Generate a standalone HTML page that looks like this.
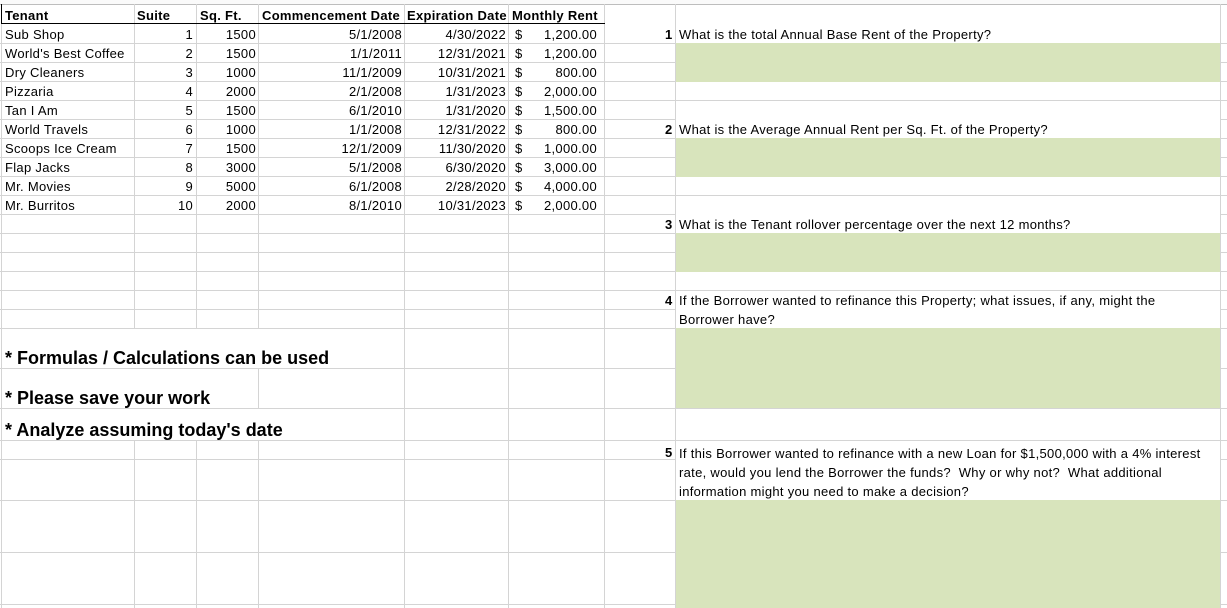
<!DOCTYPE html>
<html><head><meta charset="utf-8"><style>
*{margin:0;padding:0;box-sizing:border-box}
body{width:1227px;height:608px;overflow:hidden;background:#fff;position:relative;font-family:"Liberation Sans",Arial,sans-serif;font-size:13px;letter-spacing:0.3px;color:#000}
.h{position:absolute;height:1px;background:#d4d4d4}
.v{position:absolute;width:1px;background:#d4d4d4}
.b{position:absolute}
.t{position:absolute;white-space:nowrap;line-height:19px;height:19px}
.r{text-align:right}
.g{position:absolute;background:#d8e4bc}
.w{position:absolute;background:#fff}
.big{position:absolute;white-space:nowrap;font-weight:bold;font-size:18px;letter-spacing:0;line-height:20px}
.n{font-weight:bold;letter-spacing:0}
</style></head><body>
<div style="position:absolute;left:0;top:0;width:1227px;height:4px;background:#fafafa"></div>
<div class="h" style="left:0;top:4px;width:1227px;background:#bdbdbd"></div>
<div class="h" style="left:0;top:43px;width:1227px"></div>
<div class="h" style="left:0;top:62px;width:1227px"></div>
<div class="h" style="left:0;top:81px;width:1227px"></div>
<div class="h" style="left:0;top:100px;width:1227px"></div>
<div class="h" style="left:0;top:119px;width:1227px"></div>
<div class="h" style="left:0;top:138px;width:1227px"></div>
<div class="h" style="left:0;top:157px;width:1227px"></div>
<div class="h" style="left:0;top:176px;width:1227px"></div>
<div class="h" style="left:0;top:195px;width:1227px"></div>
<div class="h" style="left:0;top:214px;width:1227px"></div>
<div class="h" style="left:0;top:233px;width:1227px"></div>
<div class="h" style="left:0;top:252px;width:1227px"></div>
<div class="h" style="left:0;top:271px;width:1227px"></div>
<div class="h" style="left:0;top:290px;width:1227px"></div>
<div class="h" style="left:0;top:309px;width:1227px"></div>
<div class="h" style="left:0;top:328px;width:1227px"></div>
<div class="h" style="left:0;top:368px;width:1227px"></div>
<div class="h" style="left:0;top:408px;width:1227px"></div>
<div class="h" style="left:0;top:440px;width:1227px"></div>
<div class="h" style="left:0;top:459px;width:1227px"></div>
<div class="h" style="left:0;top:500px;width:1227px"></div>
<div class="h" style="left:0;top:552px;width:1227px"></div>
<div class="h" style="left:0;top:604px;width:1227px"></div>
<div class="v" style="left:1px;top:4px;height:604px"></div>
<div class="v" style="left:134px;top:4px;height:604px"></div>
<div class="v" style="left:196px;top:4px;height:604px"></div>
<div class="v" style="left:258px;top:4px;height:604px"></div>
<div class="v" style="left:404px;top:4px;height:604px"></div>
<div class="v" style="left:508px;top:4px;height:604px"></div>
<div class="v" style="left:604px;top:4px;height:604px"></div>
<div class="v" style="left:675px;top:4px;height:604px"></div>
<div class="v" style="left:1220px;top:4px;height:604px"></div>
<div class="w" style="left:2px;top:329px;width:402px;height:39px"></div>
<div class="w" style="left:2px;top:369px;width:256px;height:39px"></div>
<div class="w" style="left:259px;top:369px;width:145px;height:39px"></div>
<div class="w" style="left:2px;top:409px;width:402px;height:31px"></div>
<div class="w" style="left:676px;top:5px;width:544px;height:38px"></div>
<div class="w" style="left:676px;top:101px;width:544px;height:37px"></div>
<div class="w" style="left:676px;top:196px;width:544px;height:37px"></div>
<div class="w" style="left:676px;top:291px;width:544px;height:37px"></div>
<div class="w" style="left:676px;top:441px;width:544px;height:59px"></div>
<div class="g" style="left:676px;top:43px;width:544px;height:39px"></div>
<div class="g" style="left:676px;top:138px;width:544px;height:39px"></div>
<div class="g" style="left:676px;top:233px;width:544px;height:39px"></div>
<div class="g" style="left:676px;top:328px;width:544px;height:80px"></div>
<div class="g" style="left:676px;top:500px;width:544px;height:108px"></div>
<div class="b" style="left:1px;top:23px;width:604px;height:1px;background:#000"></div>
<div class="b" style="left:1px;top:4px;width:1px;height:20px;background:#000"></div>
<div class="t n" style="left:5px;top:6px;letter-spacing:0.3px">Tenant</div>
<div class="t n" style="left:137px;top:6px;letter-spacing:0.3px">Suite</div>
<div class="t n" style="left:200px;top:6px;letter-spacing:0.3px">Sq. Ft.</div>
<div class="t n" style="left:262px;top:6px;letter-spacing:0.3px">Commencement Date</div>
<div class="t n" style="left:407px;top:6px;letter-spacing:0.3px">Expiration Date</div>
<div class="t n" style="left:512px;top:6px;letter-spacing:0.3px">Monthly Rent</div>
<div class="t" style="left:5px;top:25px">Sub Shop</div><div class="t r" style="right:1034px;top:25px">1</div><div class="t r" style="right:971px;top:25px">1500</div><div class="t r" style="right:825px;top:25px">5/1/2008</div><div class="t r" style="right:721px;top:25px">4/30/2022</div><div class="t" style="left:515px;top:25px">$</div><div class="t r" style="right:630px;top:25px">1,200.00</div>
<div class="t" style="left:5px;top:44px">World's Best Coffee</div><div class="t r" style="right:1034px;top:44px">2</div><div class="t r" style="right:971px;top:44px">1500</div><div class="t r" style="right:825px;top:44px">1/1/2011</div><div class="t r" style="right:721px;top:44px">12/31/2021</div><div class="t" style="left:515px;top:44px">$</div><div class="t r" style="right:630px;top:44px">1,200.00</div>
<div class="t" style="left:5px;top:63px">Dry Cleaners</div><div class="t r" style="right:1034px;top:63px">3</div><div class="t r" style="right:971px;top:63px">1000</div><div class="t r" style="right:825px;top:63px">11/1/2009</div><div class="t r" style="right:721px;top:63px">10/31/2021</div><div class="t" style="left:515px;top:63px">$</div><div class="t r" style="right:630px;top:63px">800.00</div>
<div class="t" style="left:5px;top:82px">Pizzaria</div><div class="t r" style="right:1034px;top:82px">4</div><div class="t r" style="right:971px;top:82px">2000</div><div class="t r" style="right:825px;top:82px">2/1/2008</div><div class="t r" style="right:721px;top:82px">1/31/2023</div><div class="t" style="left:515px;top:82px">$</div><div class="t r" style="right:630px;top:82px">2,000.00</div>
<div class="t" style="left:5px;top:101px">Tan I Am</div><div class="t r" style="right:1034px;top:101px">5</div><div class="t r" style="right:971px;top:101px">1500</div><div class="t r" style="right:825px;top:101px">6/1/2010</div><div class="t r" style="right:721px;top:101px">1/31/2020</div><div class="t" style="left:515px;top:101px">$</div><div class="t r" style="right:630px;top:101px">1,500.00</div>
<div class="t" style="left:5px;top:120px">World Travels</div><div class="t r" style="right:1034px;top:120px">6</div><div class="t r" style="right:971px;top:120px">1000</div><div class="t r" style="right:825px;top:120px">1/1/2008</div><div class="t r" style="right:721px;top:120px">12/31/2022</div><div class="t" style="left:515px;top:120px">$</div><div class="t r" style="right:630px;top:120px">800.00</div>
<div class="t" style="left:5px;top:139px">Scoops Ice Cream</div><div class="t r" style="right:1034px;top:139px">7</div><div class="t r" style="right:971px;top:139px">1500</div><div class="t r" style="right:825px;top:139px">12/1/2009</div><div class="t r" style="right:721px;top:139px">11/30/2020</div><div class="t" style="left:515px;top:139px">$</div><div class="t r" style="right:630px;top:139px">1,000.00</div>
<div class="t" style="left:5px;top:158px">Flap Jacks</div><div class="t r" style="right:1034px;top:158px">8</div><div class="t r" style="right:971px;top:158px">3000</div><div class="t r" style="right:825px;top:158px">5/1/2008</div><div class="t r" style="right:721px;top:158px">6/30/2020</div><div class="t" style="left:515px;top:158px">$</div><div class="t r" style="right:630px;top:158px">3,000.00</div>
<div class="t" style="left:5px;top:177px">Mr. Movies</div><div class="t r" style="right:1034px;top:177px">9</div><div class="t r" style="right:971px;top:177px">5000</div><div class="t r" style="right:825px;top:177px">6/1/2008</div><div class="t r" style="right:721px;top:177px">2/28/2020</div><div class="t" style="left:515px;top:177px">$</div><div class="t r" style="right:630px;top:177px">4,000.00</div>
<div class="t" style="left:5px;top:196px">Mr. Burritos</div><div class="t r" style="right:1034px;top:196px">10</div><div class="t r" style="right:971px;top:196px">2000</div><div class="t r" style="right:825px;top:196px">8/1/2010</div><div class="t r" style="right:721px;top:196px">10/31/2023</div><div class="t" style="left:515px;top:196px">$</div><div class="t r" style="right:630px;top:196px">2,000.00</div>
<div class="big" style="left:5px;top:348px">* Formulas / Calculations can be used</div>
<div class="big" style="left:5px;top:388px">* Please save your work</div>
<div class="big" style="left:5px;top:420px">* Analyze assuming today's date</div>
<div class="t n" style="left:665px;top:25px">1</div><div class="t" style="left:679px;top:25px">What is the total Annual Base Rent of the Property?</div>
<div class="t n" style="left:665px;top:120px">2</div><div class="t" style="left:679px;top:120px">What is the Average Annual Rent per Sq. Ft. of the Property?</div>
<div class="t n" style="left:665px;top:215px">3</div><div class="t" style="left:679px;top:215px">What is the Tenant rollover percentage over the next 12 months?</div>
<div class="t n" style="left:665px;top:291px">4</div><div class="t" style="left:679px;top:291px">If the Borrower wanted to refinance this Property; what issues, if any, might the</div>
<div class="t" style="left:679px;top:310px">Borrower have?</div>
<div class="t n" style="left:665px;top:443px">5</div><div class="t" style="left:679px;top:444px">If this Borrower wanted to refinance with a new Loan for $1,500,000 with a 4% interest</div>
<div class="t" style="left:679px;top:463px">rate, would you lend the Borrower the funds?&nbsp; Why or why not?&nbsp; What additional</div>
<div class="t" style="left:679px;top:482px">information might you need to make a decision?</div>
</body></html>
